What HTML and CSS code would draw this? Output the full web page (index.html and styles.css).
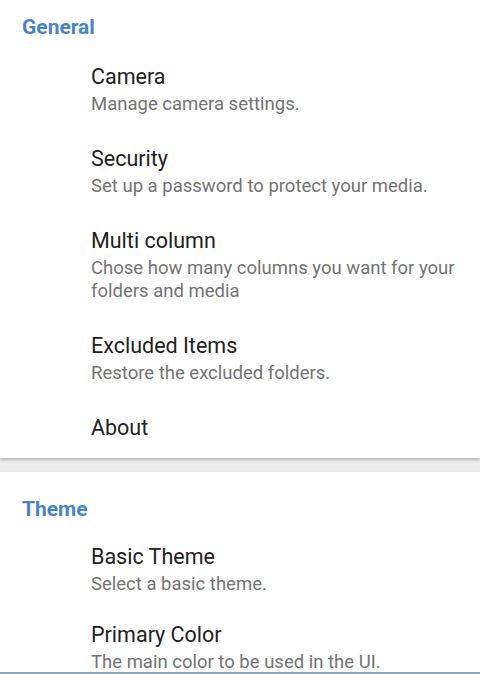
FILE: index.html
```html
<!DOCTYPE html>
<html lang="en">
<head>
  <meta charset="UTF-8" />
  <meta name="viewport" content="width=device-width, initial-scale=1.0" />
  <title>Settings</title>
  <link rel="stylesheet" href="styles.css">
</head>
<body>
  <div class="settings">
    <div class="section">
      <div class="section-title">General</div>
      <div class="pref">
        <div class="pref-title">Camera</div>
        <div class="pref-summary">Manage camera settings.</div>
      </div>
      <div class="pref">
        <div class="pref-title">Security</div>
        <div class="pref-summary">Set up a password to protect your media.</div>
      </div>
      <div class="pref">
        <div class="pref-title">Multi column</div>
        <div class="pref-summary">Chose how many columns you want for your folders and media</div>
      </div>
      <div class="pref">
        <div class="pref-title">Excluded Items</div>
        <div class="pref-summary">Restore the excluded folders.</div>
      </div>
      <div class="pref">
        <div class="pref-title">About</div>
      </div>
    </div>

    <div class="section compact">
      <div class="section-title">Theme</div>
      <div class="pref">
        <div class="pref-title">Basic Theme</div>
        <div class="pref-summary">Select a basic theme.</div>
      </div>
      <div class="pref">
        <div class="pref-title">Primary Color</div>
        <div class="pref-summary">The main color to be used in the UI.</div>
      </div>
    </div>
  </div>

  <div class="nav-edge"></div>
</body>
</html>
```

FILE: styles.css
```css
html, body {
  height: 100%;
}

body {
  margin: 0;
  padding: 0;
  overflow: hidden;
  background: #ececec;
  font-family: Roboto, "Noto Sans", sans-serif;
  -webkit-font-smoothing: antialiased;
}

.settings {
  display: flex;
  flex-direction: column;
  gap: 14px;
}

.section {
  background: #ffffff;
  padding-bottom: 2px;
  box-shadow: 0 2px 3px rgba(0,0,0,0.22);
}

.section:first-child {
  margin-top: -10px;
}

.section-title {
  padding: 23px 16px 7px 22px;
  font-size: 21px;
  line-height: 28px;
  font-weight: 700;
  color: #4a83c5;
}

.pref {
  padding: 15px 16px 14px 91px;
}

.compact .pref {
  padding-top: 13px;
  padding-bottom: 12px;
}

.pref-title {
  font-size: 21.5px;
  line-height: 28px;
  color: #212121;
}

.pref-summary {
  margin-top: 2px;
  font-size: 18.5px;
  line-height: 23px;
  color: #737373;
}

.nav-edge {
  position: fixed;
  left: 0;
  right: 0;
  bottom: 0;
  height: 2px;
  background: #8ca5b5;
}
```
